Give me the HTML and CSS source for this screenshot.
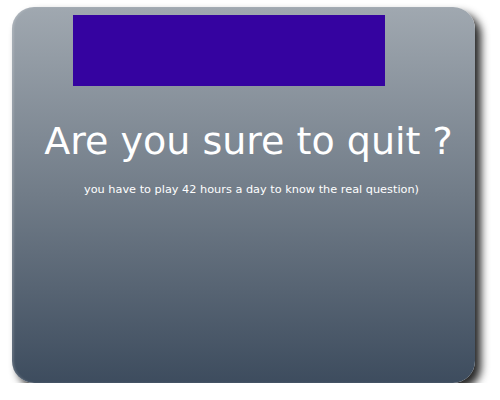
FILE: index.html
```html
<!DOCTYPE html>
<html lang="en">
<head>
<title>Quit</title>
<meta charset="utf-8">
<link rel="stylesheet" href="styles.css">
</head>
<body>

<div class="dialog">
  <div class="banner"></div>
  <h1 class="question">Are you sure to quit ?</h1>
  <p class="hint">you have to play 42 hours a day to know the real question)</p>
</div>

</body>
</html>
```

FILE: styles.css
```css
* {
  box-sizing: border-box;
}

body {
  margin: 0;
  background: #ffffff;
  font-family: "DejaVu Sans", sans-serif;
}

/* Main dialog panel */
.dialog {
  margin: 7px 0 0 12px;
  width: 463px;
  height: 376px;
  padding-top: 8px;
  border-radius: 22px;
  background: linear-gradient(to bottom, #a0a8b0 0%, #717c88 50%, #3d4c5e 100%);
  box-shadow: inset 2px 0 2px rgba(255, 255, 255, 0.15), 6px 6px 9px rgba(0, 0, 0, 0.85);
}

.banner {
  margin-left: 61px;
  width: 312px;
  height: 71px;
  background: #3503a0;
}

.question {
  margin: 33px 0 0 0;
  padding-left: 10px;
  text-align: center;
  font-size: 38px;
  font-weight: normal;
  color: #ffffff;
}

.hint {
  margin: 20px 0 0 0;
  padding-left: 16px;
  text-align: center;
  font-size: 11.3px;
  color: #ffffff;
}
```
